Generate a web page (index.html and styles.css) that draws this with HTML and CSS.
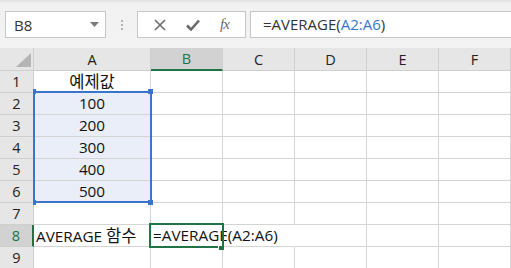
FILE: index.html
```html
<!DOCTYPE html>
<html lang="ko">
<head>
  <meta charset="UTF-8">
  <title>AVERAGE 함수</title>
  <link rel="stylesheet" href="styles.css">
</head>
<body>

  <div class="toolbar">
    <div class="name-box">
      <span>B8</span>
      <svg class="drop" width="9" height="5" viewBox="0 0 9 5"><path d="M0 0h9L4.5 5z" fill="#7b7b7b"/></svg>
    </div>
    <div class="grip"><i></i><i></i><i></i></div>
    <div class="fx-buttons">
      <svg width="12" height="12" viewBox="0 0 12 12"><path d="M1 1l10 10M11 1L1 11" stroke="#6a6a6a" stroke-width="1.6" fill="none"/></svg>
      <svg width="14" height="12" viewBox="0 0 14 12"><path d="M1 6.5l4 4L13 1.5" stroke="#6a6a6a" stroke-width="2.6" fill="none"/></svg>
      <span class="fx">fx</span>
    </div>
    <div class="formula">=AVERAGE(<span class="ref">A2:A6</span>)</div>
  </div>

  <div class="sheet">
    <div class="grid">
      <div class="corner"><span class="tri"></span></div>
      <div class="col-head">A</div>
      <div class="col-head active">B</div>
      <div class="col-head">C</div>
      <div class="col-head">D</div>
      <div class="col-head">E</div>
      <div class="col-head">F</div>

      <div class="row-head">1</div>
      <div class="cell center"><span class="ko">예제값</span></div>
      <div class="cell"></div><div class="cell"></div><div class="cell"></div><div class="cell"></div><div class="cell"></div>

      <div class="row-head">2</div>
      <div class="cell center sel">100</div>
      <div class="cell"></div><div class="cell"></div><div class="cell"></div><div class="cell"></div><div class="cell"></div>

      <div class="row-head">3</div>
      <div class="cell center sel">200</div>
      <div class="cell"></div><div class="cell"></div><div class="cell"></div><div class="cell"></div><div class="cell"></div>

      <div class="row-head">4</div>
      <div class="cell center sel">300</div>
      <div class="cell"></div><div class="cell"></div><div class="cell"></div><div class="cell"></div><div class="cell"></div>

      <div class="row-head">5</div>
      <div class="cell center sel">400</div>
      <div class="cell"></div><div class="cell"></div><div class="cell"></div><div class="cell"></div><div class="cell"></div>

      <div class="row-head">6</div>
      <div class="cell center sel">500</div>
      <div class="cell"></div><div class="cell"></div><div class="cell"></div><div class="cell"></div><div class="cell"></div>

      <div class="row-head">7</div>
      <div class="cell"></div>
      <div class="cell"></div><div class="cell"></div><div class="cell"></div><div class="cell"></div><div class="cell"></div>

      <div class="row-head active">8</div>
      <div class="cell">AVERAGE <span class="ko">함수</span></div>
      <div class="cell spill">=AVERAGE(A2:A6)</div>
      <div class="cell spill"></div><div class="cell"></div><div class="cell"></div><div class="cell"></div>

      <div class="row-head">9</div>
      <div class="cell"></div>
      <div class="cell"></div><div class="cell"></div><div class="cell"></div><div class="cell"></div><div class="cell"></div>
    </div>

    <!-- range highlight A2:A6 -->
    <div class="range">
      <i class="h tl"></i><i class="h tr"></i><i class="h bl"></i><i class="h br"></i>
    </div>
    <!-- active cell B8 -->
    <div class="active-cell"><i class="fill-handle"></i></div>
  </div>

</body>
</html>
```

FILE: styles.css
```css
body {
  margin: 0;
  width: 511px;
  height: 268px;
  overflow: hidden;
  background: #fff;
  font-family: "Open Sans", "Noto Sans CJK KR", sans-serif;
  color: #1e1e1e;
}

.toolbar {
  height: 48px;
  box-sizing: border-box;
  padding-top: 11px;
  display: flex;
  align-items: flex-start;
  background: linear-gradient(#e2e2e2, #f1f1f1 4px, #f3f3f3);
}

.name-box {
  margin-left: 5px;
  width: 101px;
  height: 27px;
  box-sizing: border-box;
  border: 1px solid #c6c6c6;
  background: #fff;
  display: flex;
  align-items: center;
  justify-content: space-between;
  padding: 0 6px 0 8px;
  font-size: 15px;
  color: #333;
}

.grip {
  width: 31px;
  height: 27px;
  display: flex;
  flex-direction: column;
  align-items: center;
  justify-content: center;
  gap: 2px;
}

.grip i {
  width: 2px;
  height: 2px;
  background: #b3b3b3;
}

.fx-buttons {
  width: 109px;
  height: 27px;
  box-sizing: border-box;
  border: 1px solid #c6c6c6;
  background: #fff;
  display: flex;
  align-items: center;
  justify-content: space-around;
  padding: 0 6px;
}

.fx {
  font-family: "Liberation Serif", serif;
  font-style: italic;
  font-size: 15px;
  color: #6a6a6a;
  letter-spacing: -1px;
}

.formula {
  margin-left: 4px;
  flex: 1;
  height: 27px;
  box-sizing: border-box;
  border: 1px solid #c6c6c6;
  border-right: none;
  background: #fff;
  padding-left: 12px;
  font-size: 15px;
  line-height: 25px;
  color: #333;
}

.ref {
  color: #3a74cc;
}

.sheet {
  position: relative;
}

.grid {
  display: grid;
  grid-template-columns: 34px 117px 72px 72px 72px 72px 72px;
  grid-template-rows: 23px repeat(9, 22px);
}

.corner,
.col-head,
.row-head,
.cell {
  box-sizing: border-box;
  border-right: 1px solid #d4d4d4;
  border-bottom: 1px solid #d4d4d4;
}

.corner {
  background: #e6e6e6;
  border-color: #cfcfcf;
  position: relative;
}

.tri {
  position: absolute;
  left: 16px;
  top: 5px;
  width: 15px;
  height: 14px;
  background: #b5b5b5;
  clip-path: polygon(100% 0, 100% 100%, 0 100%);
}

.col-head,
.row-head {
  background: #e6e6e6;
  border-color: #cfcfcf;
  font-size: 14.5px;
  color: #222;
  display: flex;
  align-items: center;
  justify-content: center;
}

.col-head.active {
  background: #d2d2d2;
  color: #217346;
  border-bottom: 2px solid #217346;
}

.row-head.active {
  background: #d2d2d2;
  color: #217346;
  border-right: 2px solid #217346;
}

.cell {
  font-size: 15.3px;
  line-height: 21px;
  padding-left: 2px;
  white-space: nowrap;
  color: #111;
}

.ko {
  font-size: 16.5px;
}

.cell.center {
  text-align: center;
  padding-left: 0;
}

.cell.sel {
  background: #e9eef8;
}

.cell.spill {
  border-right-color: transparent;
  overflow: visible;
}

.range {
  position: absolute;
  left: 33px;
  top: 43px;
  width: 119px;
  height: 112px;
  box-sizing: border-box;
  border: 2px solid #3a74cc;
}

.h {
  position: absolute;
  width: 5px;
  height: 5px;
  background: #3a74cc;
}

.h.tl { left: -2px; top: -4px; width: 3px; }
.h.tr { right: -3px; top: -4px; }
.h.bl { left: -2px; bottom: -4px; width: 3px; }
.h.br { right: -3px; bottom: -4px; }

.active-cell {
  position: absolute;
  left: 149px;
  top: 175px;
  width: 75px;
  height: 25px;
  box-sizing: border-box;
  border: 2px solid #217346;
}

.fill-handle {
  position: absolute;
  right: -2px;
  bottom: -4px;
  width: 5px;
  height: 4px;
  background: #217346;
  border-left: 1px solid #fff;
}
```
